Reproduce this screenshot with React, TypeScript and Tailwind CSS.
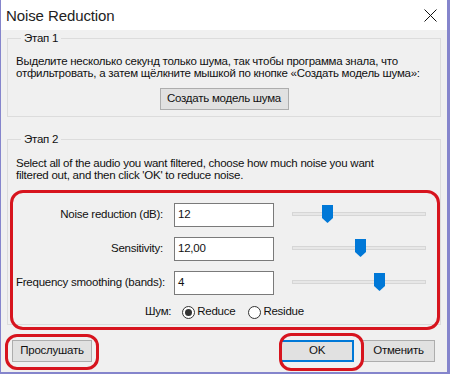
import React from "react";

const font = { fontFamily: '"Liberation Sans", Arial, sans-serif' };

function Slider({ pos }: { pos: number }) {
  return (
    <div className="relative w-[134px] h-[20px]">
      <div className="absolute left-0 right-0 top-[7px] h-[4px] bg-[#e7e7e7] border border-[#d6d6d6]" />
      <svg
        className="absolute top-0"
        style={{ left: pos }}
        width="11"
        height="18"
        viewBox="0 0 11 18"
      >
        <path d="M0 0 H11 V13 L5.5 18 L0 13 Z" fill="#0078d7" />
      </svg>
    </div>
  );
}

function Row({ label, value, pos }: { label: string; value: string; pos: number }) {
  return (
    <div className="flex items-center h-[24px]">
      <div className="w-[147px] text-right whitespace-nowrap">{label}</div>
      <div className="ml-[11px] w-[100px] h-[24px] bg-white border border-[#7a7a7a] flex items-center pl-[3px]">
        {value}
      </div>
      <div className="ml-[18px]">
        <Slider pos={pos} />
      </div>
    </div>
  );
}

function Btn({ children, w, blue }: { children: React.ReactNode; w: string; blue?: boolean }) {
  return (
    <div
      className={
        "h-[22px] flex items-center justify-center bg-[#e1e1e1] " +
        (blue ? "border-2 border-[#0078d7] " : "border border-[#adadad] ") +
        w
      }
    >
      {children}
    </div>
  );
}

export default function App() {
  return (
    <div
      className="relative w-[450px] h-[374px] bg-[#f0f0f0] border-l border-r-[3px] border-b-2 border-[#8585cc] text-[11.5px] tracking-[-0.25px] text-[#111] overflow-hidden"
      style={font}
    >
      {/* title bar */}
      <div className="h-[30px] bg-white flex items-center justify-between">
        <div className="pl-[5px] text-[15px] tracking-[-0.1px] leading-none text-[#222] mt-[1px]">Noise Reduction</div>
        <svg width="13" height="13" viewBox="0 0 13 13" className="mr-[10px]">
          <path d="M0.5 0.5 L12.5 12.5 M12.5 0.5 L0.5 12.5" stroke="#111" strokeWidth="1" />
        </svg>
      </div>

      <div className="px-[6px]">
        {/* group 1 */}
        <fieldset className="mt-[1px] border border-[#dcdcdc] px-[8px] pb-[6px] h-[86px]">
          <legend className="ml-[5px] px-[3px] leading-[14px]">Этап 1</legend>
          <div className="leading-[12px] mt-[10px] whitespace-nowrap">
            <div>Выделите несколько секунд только шума, так чтобы программа знала, что</div>
            <div>отфильтровать, а затем щёлкните мышкой по кнопке «Создать модель шума»:</div>
          </div>
          <div className="flex justify-center mt-[9px]">
            <Btn w="w-[129px]">Создать модель шума</Btn>
          </div>
        </fieldset>

        {/* group 2 */}
        <fieldset className="mt-[15px] border border-[#dcdcdc] px-[8px] h-[193px]">
          <legend className="ml-[5px] px-[3px] leading-[14px]">Этап 2</legend>
          <div className="leading-[12px] mt-[11px] whitespace-nowrap">
            <div>Select all of the audio you want filtered, choose how much noise you want</div>
            <div>filtered out, and then click 'OK' to reduce noise.</div>
          </div>
          <div className="mt-[22px] flex flex-col gap-[10px]">
            <Row label="Noise reduction (dB):" value="12" pos={30} />
            <Row label="Sensitivity:" value="12,00" pos={63} />
            <Row label="Frequency smoothing (bands):" value="4" pos={82} />
          </div>
          <div className="mt-[8px] flex items-center h-[18px]">
            <div className="ml-[129px]">Шум:</div>
            <div className="ml-[11px] w-[13px] h-[13px] rounded-full border border-[#333] bg-white flex items-center justify-center">
              <div className="w-[7px] h-[7px] rounded-full bg-[#333]" />
            </div>
            <div className="ml-[2px]">Reduce</div>
            <div className="ml-[13px] w-[13px] h-[13px] rounded-full border border-[#333] bg-white" />
            <div className="ml-[2px]">Residue</div>
          </div>
        </fieldset>

        {/* buttons */}
        <div className="mt-[15px] flex items-center">
          <div className="ml-[5px]">
            <Btn w="w-[80px]">Прослушать</Btn>
          </div>
          <div className="ml-auto flex gap-[8px] mr-[6px]">
            <Btn w="w-[74px]" blue>
              OK
            </Btn>
            <Btn w="w-[73px]">Отменить</Btn>
          </div>
        </div>
      </div>

      {/* red annotation outlines */}
      <div className="absolute left-[9px] top-[190px] w-[430px] h-[140px] border-[3px] border-[#d7141e] rounded-[13px] pointer-events-none" />
      <div className="absolute left-[4px] top-[334px] w-[94px] h-[36px] border-[3px] border-[#d7141e] rounded-[12px] pointer-events-none" />
      <div className="absolute left-[278px] top-[333px] w-[85px] h-[38px] border-[3px] border-[#d7141e] rounded-[12px] pointer-events-none" />
    </div>
  );
}
